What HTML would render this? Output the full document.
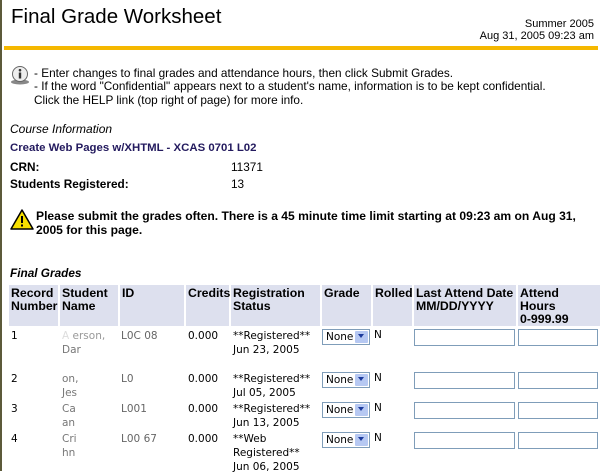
<!DOCTYPE html>
<html><head><meta charset="utf-8"><style>
body{margin:0;width:600px;height:471px;overflow:hidden;background:#fff;position:relative;font-family:"Liberation Sans","DejaVu Sans",sans-serif;font-size:11.8px;color:#000}
.a{position:absolute;white-space:nowrap}
.b{font-weight:bold}
.d{font-family:"DejaVu Sans",sans-serif;font-size:10.5px;line-height:14px}
.h{position:absolute;top:285px;height:41px;background:#dde0ee;font-weight:bold;font-size:12.3px;line-height:13px;padding:2px 0 0 2px;box-sizing:border-box;white-space:nowrap}
.sel{position:absolute;width:48px;height:16px;border:1px solid #7f9db9;box-sizing:border-box;background:#fff;font-family:"DejaVu Sans",sans-serif;font-size:10.5px;line-height:14px;padding-left:3px}
.sel i{position:absolute;right:1px;top:1px;width:13px;height:12px;background:#b6c8f2;border-radius:1px}
.sel i:after{content:"";position:absolute;left:3px;top:3px;border:3.5px solid transparent;border-top:4px solid #1c3a9c;border-bottom:0}
.in{position:absolute;height:17px;border:1px solid #7f9db9;box-sizing:border-box;background:#fff}
.g{color:#ddd}
</style></head><body>
<div class="a" style="left:0;top:0;width:2px;height:471px;background:#5c5a3a"></div>
<div class="a" style="left:11px;top:5px;font-size:20.5px">Final Grade Worksheet</div>
<div class="a" style="right:6px;top:18px;font-size:11px;text-align:right;line-height:12px">Summer 2005<br>Aug 31, 2005 09:23 am</div>
<div class="a" style="left:4px;top:46px;width:594px;height:4px;background:#f5b800"></div>

<svg class="a" style="left:10px;top:66px" width="22" height="20" viewBox="0 0 22 20"><ellipse cx="10" cy="16" rx="9" ry="2.5" fill="#888"/><circle cx="10" cy="8" r="7.5" fill="#eee" stroke="#666"/><rect x="8.8" y="6.5" width="2.4" height="6" fill="#333"/><circle cx="10" cy="4.2" r="1.3" fill="#333"/></svg>
<div class="a" style="left:34px;top:67px;line-height:13px">- Enter changes to final grades and attendance hours, then click Submit Grades.<br>- If the word "Confidential" appears next to a student's name, information is to be kept confidential.</div>
<div class="a" style="left:34px;top:93px">Click the HELP link (top right of page) for more info.</div>

<div class="a" style="left:10px;top:122px;font-style:italic;font-size:12px">Course Information</div>
<div class="a b" style="left:10px;top:142px;color:#231a5e;font-size:11.4px">Create Web Pages w/XHTML - XCAS 0701 L02</div>
<div class="a b" style="left:10px;top:160px">CRN:</div>
<div class="a" style="left:231px;top:160px">11371</div>
<div class="a b" style="left:10px;top:177px">Students Registered:</div>
<div class="a" style="left:231px;top:177px">13</div>

<svg class="a" style="left:10px;top:209px" width="24" height="22" viewBox="0 0 24 22"><path d="M12 1 L23 20 L1 20 Z" fill="#f7e000" stroke="#000" stroke-width="1.5" stroke-linejoin="round"/><rect x="11" y="7" width="2" height="7" fill="#000"/><rect x="11" y="15.5" width="2" height="2" fill="#000"/></svg>
<div class="a b" style="left:36px;top:209px;line-height:14px;font-size:12.1px">Please submit the grades often. There is a 45 minute time limit starting at 09:23 am on Aug 31,<br>2005 for this page.</div>

<div class="a b" style="left:10px;top:266px;font-style:italic">Final Grades</div>

<div class="h" style="left:9px;width:49px">Record<br>Number</div>
<div class="h" style="left:60px;width:58px">Student<br>Name</div>
<div class="h" style="left:120px;width:64px">ID</div>
<div class="h" style="left:186px;width:43px">Credits</div>
<div class="h" style="left:231px;width:89px">Registration<br>Status</div>
<div class="h" style="left:322px;width:49px">Grade</div>
<div class="h" style="left:373px;width:39px">Rolled</div>
<div class="h" style="left:414px;width:102px">Last Attend Date<br>MM/DD/YYYY</div>
<div class="h" style="left:518px;width:82px">Attend<br>Hours<br>0-999.99</div>

<div class="a d" style="left:11px;top:329px">1</div>
<div class="a d" style="left:62px;top:329px"><span class="g">A </span><span style="color:#999">erson,</span><br><span style="color:#777">Dar</span></div>
<div class="a d" style="left:121px;top:329px;color:#666">L0C<span class="g">    </span>08</div>
<div class="a d" style="left:188px;top:329px">0.000</div>
<div class="a d" style="left:233px;top:329px">**Registered**<br>Jun 23, 2005</div>
<div class="sel" style="left:322px;top:329px">None<i></i></div>
<div class="a d" style="left:374px;top:328px">N</div>
<div class="in" style="left:414px;top:329px;width:101px"></div>
<div class="in" style="left:518px;top:329px;width:80px"></div>

<div class="a d" style="left:11px;top:372px">2</div>
<div class="a d" style="left:62px;top:372px;color:#777"><span class="g">    </span>on,<br>Jes</div>
<div class="a d" style="left:121px;top:372px;color:#666">L0</div>
<div class="a d" style="left:188px;top:372px">0.000</div>
<div class="a d" style="left:233px;top:372px">**Registered**<br>Jul 05, 2005</div>
<div class="sel" style="left:322px;top:372px">None<i></i></div>
<div class="a d" style="left:374px;top:371px">N</div>
<div class="in" style="left:414px;top:372px;width:101px"></div>
<div class="in" style="left:518px;top:372px;width:80px"></div>

<div class="a d" style="left:11px;top:402px">3</div>
<div class="a d" style="left:62px;top:402px;color:#777">Ca<br><span class="g">  </span>an</div>
<div class="a d" style="left:121px;top:402px;color:#666">L001</div>
<div class="a d" style="left:188px;top:402px">0.000</div>
<div class="a d" style="left:233px;top:402px">**Registered**<br>Jun 13, 2005</div>
<div class="sel" style="left:322px;top:402px">None<i></i></div>
<div class="a d" style="left:374px;top:401px">N</div>
<div class="in" style="left:414px;top:402px;width:101px"></div>
<div class="in" style="left:518px;top:402px;width:80px"></div>

<div class="a d" style="left:11px;top:432px">4</div>
<div class="a d" style="left:62px;top:432px;color:#777">Cri<br><span class="g">  </span>hn</div>
<div class="a d" style="left:121px;top:432px;color:#666">L00<span class="g">    </span>67</div>
<div class="a d" style="left:188px;top:432px">0.000</div>
<div class="a d" style="left:233px;top:432px">**Web<br>Registered**<br>Jun 06, 2005</div>
<div class="sel" style="left:322px;top:432px">None<i></i></div>
<div class="a d" style="left:374px;top:431px">N</div>
<div class="in" style="left:414px;top:432px;width:101px"></div>
<div class="in" style="left:518px;top:432px;width:80px"></div>
</body></html>
